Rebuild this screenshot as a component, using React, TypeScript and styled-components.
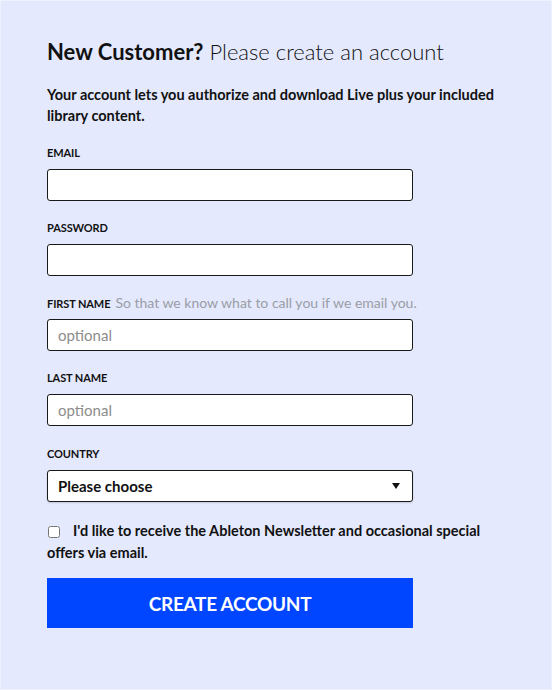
import styled, { createGlobalStyle } from 'styled-components'

const GlobalStyle = createGlobalStyle`
  html, body {
    margin: 0;
    padding: 0;
    background: #e4e9fd;
  }
  * {
    box-sizing: border-box;
  }
`

const fields = [
  { label: 'EMAIL', type: 'email' },
  { label: 'PASSWORD', type: 'password' },
  {
    label: 'FIRST NAME',
    type: 'text',
    hint: 'So that we know what to call you if we email you.',
    placeholder: 'optional',
  },
  { label: 'LAST NAME', type: 'text', placeholder: 'optional' },
]

function App() {
  return (
    <>
      <GlobalStyle />
      <Page>
        <Heading>
          <strong>New Customer?</strong> Please create an account
        </Heading>
        <Intro>
          Your account lets you authorize and download Live plus your included
          library content.
        </Intro>
        <Form onSubmit={(e) => e.preventDefault()}>
          {fields.map((f) => (
            <Field key={f.label}>
              <LabelRow>
                <Label>{f.label}</Label>
                {f.hint && <Hint>{f.hint}</Hint>}
              </LabelRow>
              <Input type={f.type} placeholder={f.placeholder} />
            </Field>
          ))}
          <Field $offset={1}>
            <LabelRow>
              <Label>COUNTRY</Label>
            </LabelRow>
            <SelectWrap>
              <Select defaultValue="">
                <option value="">Please choose</option>
              </Select>
              <Arrow width="8" height="6" viewBox="0 0 8 6">
                <path d="M0 0h8L4 6z" fill="#111" />
              </Arrow>
            </SelectWrap>
          </Field>
          <Newsletter>
            <Checkbox type="checkbox" />
            I'd like to receive the Ableton Newsletter and occasional special
            offers via email.
          </Newsletter>
          <Submit type="submit">CREATE ACCOUNT</Submit>
        </Form>
      </Page>
    </>
  )
}

export default App

const font = `'Lato', 'Noto Sans', sans-serif`

const Page = styled.main`
  width: 552px;
  height: 690px;
  padding: 37px 0 0 46px;
  border: 1px solid #eef1fe;
  background: #e4e9fd;
  font-family: ${font};
  color: #111;
`

const Heading = styled.h1`
  margin: 0;
  font-size: 22px;
  line-height: 28px;
  font-weight: 300;
  color: #111;
  strong {
    font-weight: 700;
  }
`

const Intro = styled.p`
  margin: 18px 0 0;
  width: 460px;
  font-size: 14.5px;
  line-height: 21px;
  font-weight: 700;
`

const Form = styled.form`
  margin-top: 20px;
  width: 366px;
  display: flex;
  flex-direction: column;
`

const Field = styled.div<{ $offset?: number }>`
  display: flex;
  flex-direction: column;
  gap: 9px;
  margin-top: ${(p) => p.$offset ?? 0}px;
  margin-bottom: 20px;
`

const LabelRow = styled.div`
  display: flex;
  align-items: baseline;
  gap: 5px;
  height: 14px;
  white-space: nowrap;
`

const Label = styled.span`
  font-size: 11px;
  line-height: 14px;
  font-weight: 700;
  letter-spacing: -0.1px;
`

const Hint = styled.span`
  font-size: 14px;
  line-height: 14px;
  color: #9a9da6;
`

const Input = styled.input`
  width: 366px;
  height: 32px;
  border: 1px solid #1a1a1a;
  border-radius: 3px;
  background: #fff;
  padding: 0 10px;
  font-family: ${font};
  font-size: 15px;
  color: #111;
  outline: none;
  &::placeholder {
    color: #8c8c8c;
  }
`

const SelectWrap = styled.div`
  position: relative;
  width: 366px;
`

const Select = styled.select`
  width: 100%;
  height: 32px;
  border: 1px solid #1a1a1a;
  border-radius: 3px;
  background: #fff;
  padding: 0 10px;
  appearance: none;
  font-family: ${font};
  font-size: 15px;
  font-weight: 700;
  color: #111;
  box-shadow: 0 1px 2px rgba(0, 0, 0, 0.15);
`

const Arrow = styled.svg`
  position: absolute;
  right: 13px;
  top: 13px;
  pointer-events: none;
`

const Newsletter = styled.label`
  margin-top: -2px;
  width: 470px;
  font-size: 14.5px;
  line-height: 22px;
  font-weight: 700;
`

const Checkbox = styled.input`
  width: 12px;
  height: 12px;
  margin: 0 13px 0 1px;
  vertical-align: -2px;
`

const Submit = styled.button`
  margin-top: 14px;
  width: 366px;
  height: 50px;
  border: 0;
  background: #0045ff;
  color: #fff;
  font-family: ${font};
  font-size: 19px;
  font-weight: 700;
  letter-spacing: -0.3px;
  cursor: pointer;
`
